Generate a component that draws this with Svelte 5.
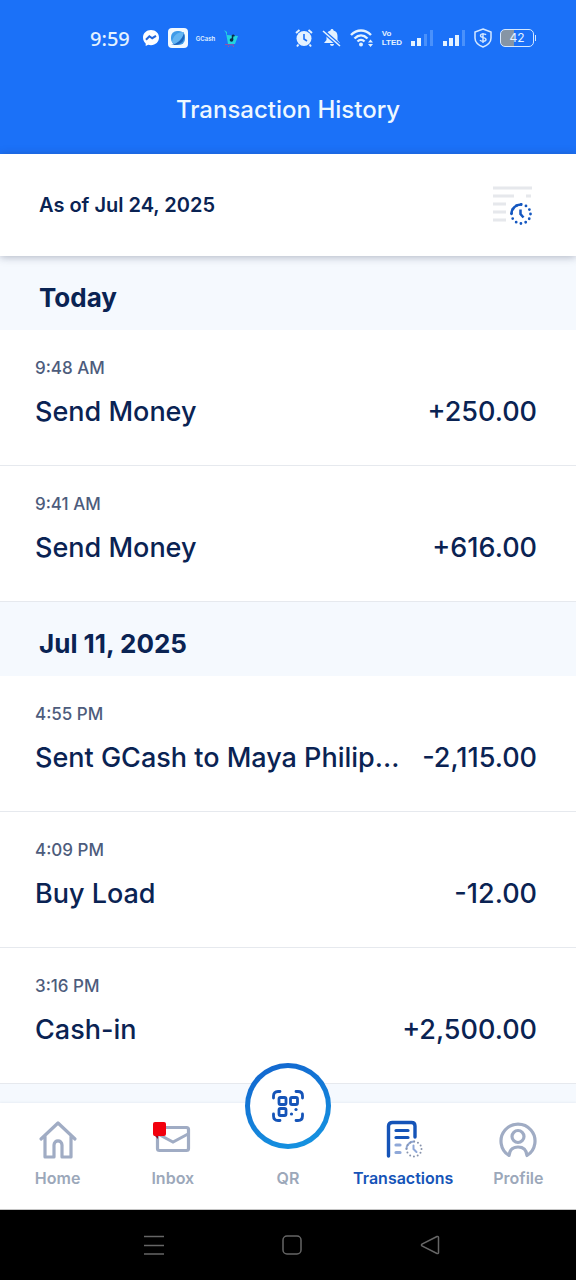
<script>
  const groups = [
    {
      title: "Today",
      items: [
        { time: "9:48 AM", name: "Send Money", amount: "+250.00" },
        { time: "9:41 AM", name: "Send Money", amount: "+616.00" },
      ],
    },
    {
      title: "Jul 11, 2025",
      items: [
        {
          time: "4:55 PM",
          name: "Sent GCash to Maya Philip...",
          amount: "-2,115.00",
        },
        { time: "4:09 PM", name: "Buy Load", amount: "-12.00" },
        { time: "3:16 PM", name: "Cash-in", amount: "+2,500.00" },
      ],
    },
  ];

  const tabs = ["Home", "Inbox", "QR", "Transactions", "Profile"];
  let active = "Transactions";
</script>

<div class="screen">
  <div class="status">
    <div class="status-group">
      <span class="clock">9:59</span>
      <svg width="18" height="18" viewBox="0 0 18 18">
        <path
          d="M9 1C4.400 1 1 4.300 1 8.600c0 2.400 1 4.400 2.700 5.800V17l2.500-1.200c.9.200 1.800.4 2.800.4 4.600 0 8-3.300 8-7.600S13.600 1 9 1z"
          fill="#fff"
        />
        <path
          d="M4 10.800l3.400-3.600 2.800 2L14 6.800"
          fill="none"
          stroke="#2467dc"
          stroke-width="2"
        />
      </svg>
      <svg width="20" height="20" viewBox="0 0 20 20">
        <rect width="20" height="20" rx="4" fill="#f2f9ff" />
        <rect x="3" y="3" width="14" height="14" rx="6" fill="#3f9be8" />
        <path d="M4 14C5 8 9 4 16 4c0 7-4 12-10 12z" fill="#63b5f3" />
        <path d="M3 17c6-1 11-5 13-12 2 7-3 12-9 12z" fill="#1d65bd" />
      </svg>
      <span class="mini">GCash</span>
      <svg class="cart" width="16" height="18" viewBox="0 0 16 18">
        <path d="M1 1l3 2v3l11 1-3 8H5L3 4z" fill="#23d5df" />
        <path d="M9.500 6v5M9.500 6l2 1" stroke="#0b2c4a" stroke-width="1.500" />
        <circle cx="8.500" cy="11" r="1.800" fill="#0b2c4a" />
        <path
          d="M2 15.500l9 .5M5 17.500h1M10 17.500h1"
          stroke="#a0509f"
          stroke-width="1.200"
        />
      </svg>
    </div>
    <div class="status-group right">
      <svg width="20" height="20" viewBox="0 0 20 20">
        <circle cx="10" cy="10.500" r="7.500" fill="#e4f2ff" />
        <path
          d="M2 5l3.500-3M18 5l-3.500-3M4.500 16.500L3 18.500M15.500 16.500l1.500 2"
          stroke="#e4f2ff"
          stroke-width="2"
        />
        <path
          d="M10 6v5l3 2"
          fill="none"
          stroke="#1b71f8"
          stroke-width="1.600"
        />
      </svg>
      <svg width="20" height="20" viewBox="0 0 20 20">
        <path
          d="M2 15l2.500-3V8c0-3 1.500-5 4-5.500C8.500.5 11.500.5 11.500 2.500c2.500.5 4 2.500 4 5.500v4l2.500 3zM8 16h4c0 2.500-4 2.500-4 0z"
          fill="#e4f2ff"
        />
        <path d="M1 3l17 15" stroke="#1b71f8" stroke-width="4" />
        <path d="M1 3l17 15" stroke="#e4f2ff" stroke-width="1.600" />
      </svg>
      <svg width="24" height="20" viewBox="0 0 24 20">
        <g fill="none" stroke="#e4f2ff" stroke-width="2.400">
          <path d="M1 7c6-6 14-6 20 0" />
          <path d="M4.500 10.500c4-4 9-4 13 0" />
          <path d="M7.500 13.500c2-2 5-2 7 0" />
        </g>
        <circle cx="11" cy="16.500" r="2" fill="#e4f2ff" />
        <path d="M18 14.500l2.500-3 2.500 3zM18 16l2.500 3 2.500-3z" fill="#e4f2ff" />
      </svg>
      <span class="volte">Vo<br />LTED</span>
      <svg width="24" height="18" viewBox="0 0 24 18">
        <path d="M1 12h4v5H1zM7 9h4v8H7z" fill="#e4f2ff" />
        <path d="M14 5h3v12h-3zM20 1h3v16h-3z" fill="#4a91fb" />
      </svg>
      <svg width="24" height="18" viewBox="0 0 24 18">
        <path d="M1 12h4v5H1zM7 9h4v8H7zM13 6h4v11h-4z" fill="#e4f2ff" />
        <path d="M20 1h3v16h-3z" fill="#4a91fb" />
      </svg>
      <svg width="18" height="20" viewBox="0 0 18 20">
        <path
          d="M9 1l8 3v6c0 4-3 7-8 9-5-2-8-5-8-9V4z"
          fill="none"
          stroke="#d5e8ff"
          stroke-width="1.500"
        />
        <path
          d="M12 7c-1-1.600-5.500-1.600-5.500.8 0 2.500 5.500 1.200 5.500 3.700 0 2.300-5 2.300-6 .5M9 5v10"
          fill="none"
          stroke="#d5e8ff"
          stroke-width="1.400"
        />
      </svg>
      <span class="battery">42</span>
    </div>
  </div>

  <header>
    <h1>Transaction History</h1>
  </header>

  <div class="as-of">
    <span>As of Jul 24, 2025</span>
    <button aria-label="Request history">
      <svg width="44" height="40" viewBox="0 0 44 40">
        <path
          d="M1 3h39M1 11h21M34 11h5M1 19h13M1 27h13M1 35h13"
          stroke="#e6e8ec"
          stroke-width="3"
        />
        <path
          d="M19.500 29a9.500 9.500 0 0 1 10.500-9.500"
          fill="none"
          stroke="#1457c0"
          stroke-width="2.500"
        />
        <circle
          cx="29"
          cy="29"
          r="9.500"
          fill="none"
          stroke="#1457c0"
          stroke-width="2.800"
          stroke-linecap="round"
          stroke-dasharray="0 4.970"
        />
        <path
          d="M28.500 24.500V29l3 3.500"
          fill="none"
          stroke="#1457c0"
          stroke-width="2.500"
        />
      </svg>
    </button>
  </div>

  <main>
    {#each groups as group}
      <section>
        <h2>{group.title}</h2>
        <ul>
          {#each group.items as item}
            <li>
              <span class="time">{item.time}</span>
              <div class="line">
                <span class="name">{item.name}</span>
                <span>{item.amount}</span>
              </div>
            </li>
          {/each}
        </ul>
      </section>
    {/each}
    <div class="rest"></div>
  </main>

  <nav>
    {#each tabs as tab}
      <button
        class="tab"
        class:active={active === tab}
        on:click={() => (active = tab)}
      >
        {#if tab === "Home"}
          <svg width="40" height="40" viewBox="0 0 40 40">
            <path
              d="M3 19L20 3l17 16M7 16v21h9V25c0-5.500 8-5.500 8 0v12h9V16"
              fill="none"
              stroke="#a0acc4"
              stroke-width="3.200"
              stroke-linejoin="round"
              stroke-linecap="round"
            />
          </svg>
        {:else if tab === "Inbox"}
          <svg width="40" height="40" viewBox="0 0 40 40">
            <rect
              x="4.500"
              y="7.500"
              width="31"
              height="23"
              rx="2"
              fill="none"
              stroke="#a0acc4"
              stroke-width="3.200"
            />
            <path
              d="M5 14l15 8 15-8"
              fill="none"
              stroke="#a0acc4"
              stroke-width="3"
            />
            <path d="M1 15l4 4v-4z" fill="#8c1028" />
            <rect x="0" y="2" width="13" height="14" rx="2" fill="#f2000d" />
          </svg>
        {:else if tab === "QR"}
          <span class="qr">
            <svg width="34" height="34" viewBox="0 0 34 34">
              <g
                fill="none"
                stroke="#1554b8"
                stroke-width="2.800"
                stroke-linecap="round"
              >
                <path
                  d="M2.500 9V7c0-3 1.500-4.500 4.500-4.500h2M25 2.500h2c3 0 4.500 1.500 4.500 4.500v2M31.500 25v2c0 3-1.500 4.500-4.500 4.500h-2M9 31.500H7c-3 0-4.500-1.500-4.500-4.500v-2"
                />
                <rect x="8" y="8.500" width="7" height="7" rx="1.500" />
                <rect x="19.500" y="8.500" width="7" height="7" rx="1.500" />
                <rect x="8" y="19.500" width="7" height="7" rx="1.500" />
              </g>
              <circle cx="25" cy="20.500" r="1.600" fill="#1554b8" />
              <circle cx="20.500" cy="25" r="1.600" fill="#1554b8" />
            </svg>
          </span>
        {:else if tab === "Transactions"}
          <svg width="40" height="40" viewBox="0 0 40 40">
            <g fill="none" stroke-linecap="round">
              <path
                d="M5.500 36V6c0-2.500 1.500-3.500 4-3.500h19c2.500 0 3.500 1 3.500 3.500v11"
                stroke="#1554b8"
                stroke-width="3.400"
              />
              <path
                d="M13 10.500h12M13 17.500h12"
                stroke="#1554b8"
                stroke-width="3.200"
              />
              <path
                d="M13 25h4M13 32.500h4"
                stroke="#8fa8d8"
                stroke-width="3.200"
              />
              <path
                d="M23.500 29a7.500 7.500 0 0 1 7.500-7.500"
                stroke="#8fa8d8"
                stroke-width="2"
              />
              <circle
                cx="31"
                cy="29"
                r="7.500"
                stroke="#8793ac"
                stroke-width="2"
                stroke-dasharray="0 3.927"
              />
              <path
                d="M30.500 25.500V29l3 3"
                stroke="#8fa8d8"
                stroke-width="2"
              />
            </g>
          </svg>
        {:else}
          <svg width="40" height="40" viewBox="0 0 40 40">
            <g
              fill="none"
              stroke="#a0acc4"
              stroke-width="3.200"
              stroke-linejoin="round"
            >
              <path
                d="M11 35.500A17 17 0 1 1 29 35.500C28.500 30 25 27 20 27S11.500 30 11 35.500z"
              />
              <circle cx="20" cy="16.500" r="6" />
            </g>
          </svg>
        {/if}
        <span>{tab}</span>
      </button>
    {/each}
  </nav>

  <div class="system">
    <button aria-label="Recent apps">
      <svg width="20" height="20" viewBox="0 0 20 20">
        <path d="M0 1.500h20M0 10.500h20M0 19h20" />
      </svg>
    </button>
    <button aria-label="Home screen">
      <svg width="20" height="20" viewBox="0 0 20 20">
        <rect x="1" y="1" width="18" height="18" rx="4" />
      </svg>
    </button>
    <button aria-label="Back">
      <svg width="20" height="20" viewBox="0 0 20 20">
        <path
          d="M17 1.500L2 9q-1 1 0 2l15 7.500q1.500.5 1.500-1V2.500q0-1.500-1.500-1z"
        />
      </svg>
    </button>
  </div>
</div>

<style>
  :global(body) {
    margin: 0;
  }

  .screen {
    display: flex;
    flex-direction: column;
    height: 100vh;
    overflow: hidden;
    background: white;
    color: #0a2353;
    font-family: Inter, "Open Sans", sans-serif;
  }

  button {
    padding: 0;
    border: none;
    background: none;
    font-family: inherit;
    cursor: pointer;
  }

  svg {
    display: block;
    flex: none;
  }

  .status {
    display: flex;
    justify-content: space-between;
    align-items: center;
    height: 76px;
    padding: 0 42px 0 90px;
    box-sizing: border-box;
    background: #1b71f8;
    color: #e4f2ff;
  }

  .status-group {
    display: flex;
    align-items: center;
    gap: 8px;
  }

  .clock {
    margin-right: 4px;
    font: 20px "Noto Sans", sans-serif;
    font-weight: 500;
  }

  .mini {
    font-size: 6px;
    font-weight: 600;
  }

  .volte {
    font: bold 8px/9px "Liberation Sans", sans-serif;
  }

  .battery {
    position: relative;
    width: 32px;
    height: 16px;
    border: 1px solid #d5e8ff;
    border-radius: 5px;
    background: linear-gradient(90deg, #8695a5 42%, transparent 42%);
    font-size: 12px;
    line-height: 16px;
    text-align: center;
  }

  .battery::after {
    content: "";
    position: absolute;
    top: 5px;
    right: -3px;
    width: 1px;
    height: 6px;
    background: #d5e8ff;
  }

  header {
    padding: 18px 0 28px;
    background: #1b71f8;
    color: #eef8ff;
    text-align: center;
  }

  h1 {
    margin: 0;
    font-size: 24px;
    line-height: 32px;
    font-weight: 500;
  }

  .as-of {
    position: relative;
    display: flex;
    justify-content: space-between;
    align-items: center;
    height: 102px;
    padding: 0 40px 0 39px;
    background: white;
    box-shadow: 0 1px 8px rgba(40, 50, 80, 0.35);
    font-size: 20px;
    font-weight: 600;
  }

  main {
    display: flex;
    flex: 1;
    flex-direction: column;
    min-height: 0;
    overflow: hidden;
  }

  h2 {
    margin: 0;
    padding: 24px 39px 14px;
    background: #f5f9fe;
    font-size: 26px;
    line-height: 36px;
    font-weight: 700;
  }

  ul {
    margin: 0;
    padding: 0;
    list-style: none;
  }

  li {
    display: flex;
    flex-direction: column;
    gap: 14px;
    padding: 26px 39px 35px 35px;
    border-bottom: 1px solid #e6e9ee;
  }

  .time {
    color: #4d5c7c;
    font-size: 17px;
    line-height: 24px;
    font-weight: 500;
  }

  .line {
    display: flex;
    justify-content: space-between;
    gap: 16px;
    font-size: 27px;
    line-height: 36px;
    font-weight: 500;
    white-space: nowrap;
  }

  .name {
    overflow: hidden;
  }

  .rest {
    flex: 1;
    background: #f5f9fe;
  }

  nav {
    position: relative;
    display: grid;
    grid-template-columns: repeat(5, 1fr);
    grid-template-rows: 100%;
    height: 106px;
    background: white;
    border-bottom: 1px solid #c4c4c4;
    box-shadow: 0 -1px 2px rgba(40, 60, 100, 0.06);
  }

  .tab {
    display: flex;
    flex-direction: column;
    align-items: center;
    justify-content: flex-end;
    gap: 7px;
    padding-bottom: 20px;
    color: #9ca8ba;
    font-size: 16px;
    line-height: 22px;
    font-weight: 600;
  }

  .active {
    color: #1554b8;
  }

  /* raised scan button, sits above the bar */
  .qr {
    display: grid;
    flex: none;
    place-items: center;
    width: 76px;
    height: 76px;
    margin-top: -48px;
    margin-bottom: 11px;
    border: 5px solid transparent;
    border-radius: 50%;
    background:
      linear-gradient(white, white) padding-box,
      linear-gradient(160deg, #1263ce, #1597e2) border-box;
  }

  .system {
    display: flex;
    justify-content: space-between;
    align-items: center;
    height: 70px;
    padding: 0 136px 0 144px;
    background: black;
  }

  .system svg {
    fill: none;
    stroke: #666;
    stroke-width: 1.5;
  }
</style>
